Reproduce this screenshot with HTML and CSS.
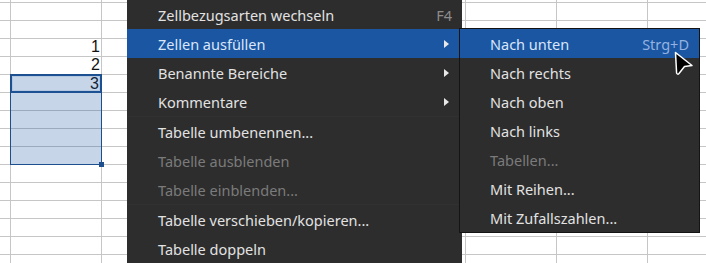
FILE: index.html
```html
<!DOCTYPE html>
<html lang="de">
<head>
<meta charset="utf-8">
<link rel="stylesheet" href="styles.css">
</head>
<body>
<div class="sheet">
  <div class="cell num r4">1</div>
  <div class="cell num r5">2</div>
  <div class="range"><div class="handle"></div></div>
  <div class="active">3</div>
</div>

<div class="menu main">
  <div class="item"><span class="label">Zellbezugsarten wechseln</span><span class="accel">F4</span></div>
  <div class="item hl"><span class="label">Zellen ausfüllen</span><span class="arrow"></span></div>
  <div class="item"><span class="label">Benannte Bereiche</span><span class="arrow"></span></div>
  <div class="item"><span class="label">Kommentare</span><span class="arrow"></span></div>
  <div class="sep"></div>
  <div class="item"><span class="label">Tabelle umbenennen...</span></div>
  <div class="item dis"><span class="label">Tabelle ausblenden</span></div>
  <div class="item dis"><span class="label">Tabelle einblenden...</span></div>
  <div class="sep"></div>
  <div class="item"><span class="label">Tabelle verschieben/kopieren...</span></div>
  <div class="item"><span class="label">Tabelle doppeln</span></div>
</div>

<div class="menu sub">
  <div class="item hl"><span class="label">Nach unten</span><span class="accel">Strg+D</span></div>
  <div class="item"><span class="label">Nach rechts</span></div>
  <div class="item"><span class="label">Nach oben</span></div>
  <div class="item"><span class="label">Nach links</span></div>
  <div class="item dis"><span class="label">Tabellen...</span></div>
  <div class="item"><span class="label">Mit Reihen...</span></div>
  <div class="item"><span class="label">Mit Zufallszahlen...</span></div>
</div>

<svg class="cursor" width="22" height="26" viewBox="0 0 22 26">
  <path d="M1.5 1.5 L18 14.5 L10.5 15.5 L5 22.5 Q3.5 24 2.6 22 Z" fill="#000" stroke="#fff" stroke-width="1.5" stroke-linejoin="round"/>
</svg>
</body>
</html>
```

FILE: styles.css
```css
html, body {
  margin: 0;
  padding: 0;
  background: #ffffff;
  overflow: hidden;
  width: 706px;
  height: 263px;
}

.sheet {
  position: relative;
  width: 706px;
  height: 263px;
  display: grid;
  grid-template-columns: 11px repeat(7, 91px);
  grid-template-rows: 3px repeat(14, 18px);
  background-image:
    linear-gradient(to right, #c6c6c6 0 1px, transparent 1px),
    linear-gradient(to bottom, #c6c6c6 0 1px, transparent 1px);
  background-size: 91px 100%, 100% 18px;
  background-position: 10px 0, 0 2px;
  font-family: "Liberation Sans", Arial, sans-serif;
  font-size: 16px;
  color: #111;
}

.cell {
  grid-column: 2;
  line-height: 16px;
  text-align: right;
  padding-right: 2px;
}
.r4 { grid-row: 4; }
.r5 { grid-row: 5; }

.range {
  grid-column: 2;
  grid-row: 6 / 11;
  margin: -1px 0 0 -1px;
  position: relative;
  border: 1px solid #1d4f8e;
  background: rgba(27, 87, 163, 0.25);
}

.handle {
  position: absolute;
  right: -3px;
  bottom: -3px;
  width: 5px;
  height: 5px;
  background: #1d4f8e;
}

.active {
  grid-column: 2;
  grid-row: 6;
  margin: -1px 0 0 -1px;
  border: 2px solid #1d4f8e;
  box-shadow: inset 0 0 0 1px #e6edf6;
  text-align: right;
  line-height: 15px;
  padding-right: 1px;
}

.menu {
  position: absolute;
  background: #2d2d2d;
  font-family: "Noto Sans", "Open Sans", sans-serif;
  font-size: 14.5px;
  color: #e2e2e2;
  box-sizing: border-box;
}

.main {
  left: 127px;
  top: 0;
  width: 335px;
  height: 270px;
}

.sub {
  left: 459px;
  top: 28px;
  width: 241px;
  border: 1px solid #141414;
}

.item {
  height: 29px;
  display: flex;
  align-items: center;
  justify-content: space-between;
  padding: 0 10px 0 31px;
  white-space: nowrap;
}

.sub .item {
  padding-left: 30px;
}

.item.hl {
  background: #1b56a3;
  color: #d9e6f8;
}

.item.dis {
  color: #7b7b7b;
}

.accel {
  color: #8c8c8c;
}

.item.hl .accel {
  color: #93b2e0;
}

.arrow {
  width: 0;
  height: 0;
  border-left: 5px solid #e8e8e8;
  border-top: 4px solid transparent;
  border-bottom: 4px solid transparent;
  margin-right: 3px;
}

.sep {
  height: 1px;
  margin: 0;
  background: #313131;
}

.cursor {
  position: absolute;
  left: 674px;
  top: 51px;
}
```
